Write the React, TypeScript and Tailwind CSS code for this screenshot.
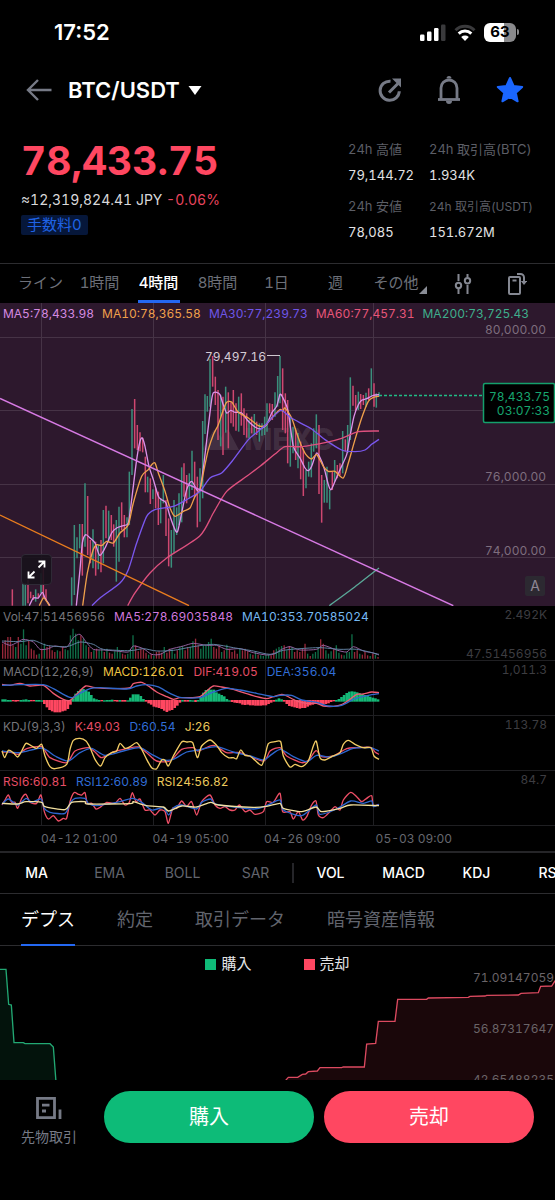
import type { ReactNode } from 'react';

type Point = [number, number];

// Series are plotted on a grid three times finer than the panel's own units
const PLOT_SCALE = 'scale(0.33333)';
const SLOT = 7.82;

const INTERVALS = ['ライン', '1時間', '4時間', '8時間', '1日', '週'];

const STATS = [
  { label: '24h 高値', value: '79,144.72', size: 'text-[13px]' },
  { label: '24h 取引高(BTC)', value: '1.934K', size: 'text-[13px]' },
  { label: '24h 安値', value: '78,085', size: 'text-[13px]' },
  { label: '24h 取引高(USDT)', value: '151.672M', size: 'text-xs' },
];

const MA_LEGEND = [
  { text: 'MA5:78,433.98', color: 'text-[#d58ae0]' },
  { text: 'MA10:78,365.58', color: 'text-[#f0a04b]' },
  { text: 'MA30:77,239.73', color: 'text-[#6f56e8]' },
  { text: 'MA60:77,457.31', color: 'text-[#e8567a]' },
  { text: 'MA200:73,725.43', color: 'text-[#3fae8c]' },
];

const MAIN_INDICATORS = ['MA', 'EMA', 'BOLL', 'SAR'];
const SUB_INDICATORS = ['VOL', 'MACD', 'KDJ', 'RSI'];
const DETAIL_TABS = ['デプス', '約定', '取引データ', '暗号資産情報'];
const DATES = ['04-12 01:00', '04-19 05:00', '04-26 09:00', '05-03 09:00'];
const GRID_X = [41, 153, 265, 373];

// x, high, low, 1 = up / 0 = down
const CANDLES: [number, number, number, number][] = [
  [37, 859, 908, 0], [69, 843, 908, 1], [76, 841, 908, 1], [84, 831, 901, 0], [92, 866, 886, 0],
  [100, 876, 891, 0], [107, 859, 896, 1], [115, 871, 886, 0], [123, 811, 871, 1], [130, 796, 886, 0],
  [138, 859, 891, 0], [215, 823, 908, 1], [223, 666, 876, 1], [231, 703, 766, 1], [239, 663, 736, 1],
  [247, 663, 818, 0], [255, 541, 731, 1], [263, 579, 756, 0], [271, 711, 781, 0], [279, 679, 796, 1],
  [287, 716, 818, 0], [295, 726, 799, 1], [303, 711, 808, 0], [310, 621, 781, 1], [318, 608, 706, 0],
  [326, 623, 716, 1], [334, 636, 711, 0], [341, 664, 731, 0], [349, 651, 836, 1], [357, 611, 776, 1],
  [365, 598, 681, 0], [373, 636, 703, 0], [381, 643, 703, 1], [388, 506, 666, 1], [396, 318, 516, 1],
  [404, 288, 436, 0], [412, 366, 441, 0], [420, 388, 445, 0], [428, 404, 448, 0], [436, 461, 568, 0],
  [443, 521, 568, 1], [451, 526, 603, 0], [459, 559, 588, 1], [467, 556, 616, 0], [475, 566, 666, 0],
  [482, 586, 661, 1], [490, 516, 601, 1], [498, 591, 699, 0], [506, 646, 790, 0], [514, 681, 794, 1],
  [522, 591, 751, 1], [530, 613, 696, 1], [537, 571, 666, 1], [545, 493, 658, 1], [552, 481, 581, 0],
  [560, 516, 601, 0], [568, 511, 586, 1], [576, 443, 561, 1], [584, 476, 581, 0], [592, 521, 673, 0],
  [600, 496, 656, 1], [608, 354, 586, 1], [615, 274, 393, 1], [622, 279, 326, 1], [630, 168, 311, 1],
  [638, 159, 251, 0], [646, 221, 306, 0], [654, 261, 411, 0], [662, 276, 430, 1], [669, 281, 456, 0],
  [677, 251, 389, 1], [685, 268, 436, 0], [693, 298, 361, 0], [700, 261, 371, 0], [708, 301, 383, 0],
  [716, 281, 386, 1], [724, 271, 368, 0], [732, 316, 396, 0], [740, 331, 404, 0], [747, 351, 406, 1],
  [755, 341, 391, 0], [763, 333, 396, 1], [770, 356, 396, 0], [778, 361, 416, 1], [786, 361, 398, 1],
  [794, 341, 396, 1], [801, 301, 386, 1], [809, 301, 331, 0], [817, 303, 351, 0], [825, 268, 341, 1],
  [833, 219, 311, 1], [840, 159, 301, 1], [848, 196, 381, 0], [856, 271, 391, 0], [863, 291, 481, 0],
  [871, 341, 491, 1], [879, 371, 451, 1], [887, 381, 471, 0], [894, 390, 496, 1], [902, 416, 529, 0],
  [910, 436, 579, 0], [918, 501, 556, 1], [926, 476, 521, 1], [934, 421, 523, 1], [941, 376, 446, 1],
  [949, 334, 436, 1], [957, 366, 573, 0], [965, 516, 659, 0], [973, 531, 599, 1], [981, 491, 599, 1],
  [989, 561, 619, 1], [997, 506, 561, 0], [1004, 471, 536, 1], [1012, 486, 526, 0], [1020, 481, 516, 0],
  [1028, 384, 511, 1], [1036, 409, 446, 0], [1043, 366, 450, 1], [1051, 223, 411, 1], [1059, 248, 308, 0],
  [1067, 276, 323, 0], [1075, 266, 321, 1], [1082, 273, 318, 0], [1090, 276, 306, 0], [1098, 269, 311, 1],
  [1106, 256, 291, 0], [1114, 196, 281, 1], [1122, 241, 311, 0], [1129, 271, 314, 1], [1137, 268, 281, 1],
];

const MA5: Point[] = [
  [229, 908], [240, 800], [247, 720], [257, 695], [270, 705], [285, 720], [299, 757], [315, 735], [335, 690],
  [350, 675], [370, 668], [385, 660], [395, 590], [410, 470], [420, 415], [427, 405], [435, 430], [447, 490],
  [460, 530], [475, 580], [485, 590], [498, 600], [510, 640], [525, 680], [533, 685], [545, 630], [560, 560],
  [575, 535], [590, 560], [600, 560], [612, 480], [625, 370], [635, 290], [640, 270], [650, 268], [660, 275],
  [668, 300], [680, 330], [692, 322], [705, 328], [725, 330], [745, 355], [765, 372], [780, 378], [800, 365],
  [815, 330], [830, 310], [840, 274], [848, 283], [860, 310], [867, 340], [880, 430], [900, 465], [915, 495],
  [925, 503], [935, 490], [950, 450], [965, 475], [975, 505], [985, 545], [993, 560], [1005, 535], [1020, 500],
  [1040, 455], [1050, 400], [1062, 340], [1075, 305], [1085, 292], [1100, 287], [1120, 277], [1137, 275],
];
const MA10: Point[] = [
  [248, 908], [262, 810], [278, 745], [290, 725], [305, 728], [320, 715], [340, 720], [360, 690], [385, 665],
  [400, 600], [425, 520], [445, 500], [455, 485], [465, 480], [475, 510], [495, 565], [510, 615], [525, 640],
  [550, 625], [570, 615], [585, 580], [600, 560], [612, 500], [625, 440], [640, 395], [655, 365], [670, 320],
  [680, 298], [695, 297], [715, 328], [745, 345], [775, 368], [795, 368], [815, 345], [840, 320], [848, 325],
  [855, 315], [875, 345], [890, 390], [905, 430], [918, 455], [935, 468], [950, 455], [970, 490], [985, 505],
  [1005, 505], [1030, 525], [1045, 480], [1065, 410], [1085, 345], [1105, 295], [1120, 283], [1137, 280],
];
const MA30: Point[] = [
  [276, 908], [300, 885], [360, 840], [385, 800], [410, 720], [440, 640], [465, 620], [520, 610], [560, 590],
  [600, 565], [630, 525], [665, 510], [700, 470], [745, 410], [775, 385], [800, 362], [825, 335], [845, 322],
  [870, 342], [905, 362], [935, 378], [975, 410], [1025, 441], [1065, 446], [1095, 441], [1115, 424], [1137, 409],
];
const MA60: Point[] = [
  [383, 908], [405, 870], [450, 810], [500, 765], [600, 698], [640, 630], [680, 565], [740, 520], [780, 490],
  [825, 453], [855, 431], [905, 431], [975, 419], [1025, 406], [1075, 386], [1137, 384],
];
const MA5_HEAD: Point[] = [[88, 908], [100, 885], [115, 885], [127, 868], [135, 885], [150, 908]];
const MA10_HEAD: Point[] = [[118, 908], [130, 885], [140, 895], [148, 908]];
const MA200: Point[] = [[988, 908], [1060, 855], [1137, 795]];

// Positive = up bar, negative = down bar
const VOLUME = [
  -45, -55, -65, -65, -40, 35, -65, 45, 88, 40, -55, -30, -25, -12, 15, -30, 45, -35, -38, -25, -20, 25, -22, -35, 28,
  25, 70, 90, 75, 55, -70, 60, 40, -35, -20, 25, -30, 25, 28, -20, 30, -18, -15, 22, 35, 25, -15, -12, 15, 28, 70,
  -40, -22, -30, -28, -18, 12, -15, 8, -20, -22, -18, 35, -18, -30, 28, 15, -25, 35, 38, -25, -35, 35, 52, -60, -40,
  30, 40, 40, 50, 60, -35, -30, -40, 20, -25, 42, -30, -20, -25, -15, 30, -25, -30, -22, 15, -12, 20, -12, 10, 8,
  12, 12, -10, -25, 30, 35, 38, -40, 25, -38, 35, -20, -25, -20, -30, -45, 15, -8, 15, 20, 35, -58, -45, 25, 15, 22,
  -28, 40, 18, -12, 10, 20, 20, 73, -20, -25, 15, -12, -20, -10, 8, -15, 12, -5,
];
const VOL_MA5: Point[] = [
  [6, 108], [30, 118], [50, 110], [70, 100], [100, 108], [120, 130], [145, 128], [165, 120], [200, 123], [220, 95],
  [240, 85], [260, 110], [280, 130], [310, 132], [350, 135], [385, 138], [400, 120], [430, 128], [455, 145],
  [480, 145], [510, 130], [550, 120], [580, 112], [620, 118], [650, 118], [680, 130], [720, 128], [760, 140],
  [800, 147], [825, 143], [845, 130], [870, 122], [900, 132], [950, 130], [970, 118], [1010, 132], [1040, 138],
  [1060, 122], [1090, 135], [1115, 140], [1137, 147],
];
const VOL_MA10: Point[] = [
  [6, 105], [60, 107], [100, 103], [140, 118], [200, 122], [240, 108], [280, 115], [310, 130], [390, 134],
  [430, 128], [470, 135], [520, 133], [580, 122], [640, 115], [700, 125], [760, 135], [810, 145], [850, 133],
  [900, 128], [960, 125], [1020, 130], [1070, 130], [1137, 145],
];

const MACD_BARS = [
  5, 5, 3, 3, -2, -3, -2, 3, 4, 5, 3, -2, -2, 3, 3, 2, -10, -20, -28, -32, -35, -35, -35, -32, -30, -25, -12, 8, 22,
  30, 35, 36, 32, 28, 18, 8, 5, 3, -2, 2, 3, 3, 4, -2, -3, 3, -3, -3, 2, 10, 20, 20, 20, 15, 6, -3, -8, -12, -18,
  -20, -22, -25, -30, -34, -30, -28, -22, -15, -6, 3, -3, -3, 3, 2, -4, 3, 12, 25, 33, 36, 34, 34, 26, 22, 18, 14, 6,
  2, -4, -6, -7, -8, -12, -13, -12, -14, -14, -15, -15, -15, -14, -14, -10, -6, -3, 4, 8, 5, -3, -10, -16, -18, -20,
  -22, -24, -22, -22, -18, -14, -12, -8, -10, -12, -12, -10, -8, -4, -2, 3, 6, 12, 18, 24, 28, 29, 28, 26, 23, 21,
  18, 16, 13, 10, 8, 5,
];
const DIF: Point[] = [
  [6, 70], [30, 73], [60, 67], [90, 75], [130, 73], [160, 97], [190, 115], [210, 118], [235, 95], [257, 75],
  [285, 80], [340, 83], [388, 81], [400, 68], [425, 64], [445, 75], [470, 93], [500, 107], [520, 115], [540, 110],
  [575, 110], [600, 107], [620, 90], [640, 75], [665, 78], [700, 85], [730, 95], [770, 107], [800, 113], [820, 107],
  [845, 100], [860, 105], [890, 120], [920, 127], [950, 127], [970, 135], [1000, 136], [1025, 131], [1050, 115],
  [1070, 100], [1090, 99], [1115, 93], [1137, 95],
];
const DEA: Point[] = [
  [6, 73], [60, 71], [130, 71], [160, 83], [190, 100], [215, 110], [240, 97], [270, 83], [300, 80], [380, 84],
  [410, 75], [440, 71], [475, 78], [510, 97], [545, 110], [600, 110], [640, 93], [680, 82], [720, 87], [770, 97],
  [820, 107], [840, 103], [875, 103], [905, 117], [950, 124], [985, 135], [1025, 133], [1065, 113], [1105, 103],
  [1137, 98],
];

const KDJ_J: Point[] = [
  [6, 105], [14, 125], [25, 103], [40, 110], [53, 123], [65, 105], [78, 82], [95, 90], [110, 97], [125, 85],
  [135, 120], [150, 152], [165, 158], [200, 145], [210, 100], [220, 73], [240, 67], [258, 75], [270, 95], [285, 130],
  [302, 150], [315, 125], [335, 110], [350, 105], [360, 82], [375, 97], [390, 92], [410, 80], [425, 100], [440, 130],
  [455, 155], [470, 158], [485, 132], [495, 133], [505, 150], [520, 120], [545, 78], [560, 78], [578, 80],
  [592, 125], [605, 90], [630, 72], [650, 88], [665, 110], [685, 125], [700, 125], [710, 128], [722, 102],
  [735, 118], [750, 120], [765, 133], [785, 148], [795, 120], [805, 83], [825, 77], [842, 77], [850, 120],
  [870, 153], [885, 145], [905, 152], [925, 135], [940, 90], [949, 76], [960, 125], [975, 132], [995, 122],
  [1020, 110], [1030, 85], [1045, 73], [1065, 85], [1090, 95], [1113, 95], [1122, 120], [1137, 130],
];
const KDJ_K: Point[] = [
  [6, 108], [30, 108], [55, 115], [80, 98], [125, 92], [150, 125], [200, 140], [225, 105], [265, 95], [285, 108],
  [305, 125], [340, 108], [380, 98], [415, 93], [440, 110], [470, 135], [510, 135], [545, 100], [580, 95],
  [595, 105], [640, 88], [680, 110], [720, 110], [790, 135], [810, 105], [840, 95], [860, 120], [905, 140],
  [925, 133], [948, 104], [965, 122], [1000, 120], [1040, 98], [1070, 95], [1112, 94], [1125, 108], [1137, 115],
];
const KDJ_D: Point[] = [
  [6, 105], [60, 110], [125, 96], [165, 120], [205, 135], [240, 110], [275, 97], [315, 118], [370, 105], [420, 95],
  [455, 115], [490, 132], [520, 130], [560, 108], [595, 102], [650, 92], [700, 108], [750, 120], [790, 132],
  [815, 115], [842, 100], [880, 122], [920, 137], [950, 118], [990, 123], [1030, 110], [1060, 97], [1110, 95],
  [1137, 105],
];

const RSI6: Point[] = [
  [6, 102], [15, 87], [25, 72], [35, 94], [45, 94], [53, 112], [65, 82], [78, 70], [90, 94], [110, 97], [123, 72],
  [133, 122], [145, 144], [160, 134], [175, 150], [190, 142], [200, 142], [210, 92], [222, 65], [235, 70], [245, 72],
  [255, 65], [262, 97], [275, 97], [288, 114], [303, 107], [320, 94], [345, 97], [360, 82], [375, 102], [388, 94],
  [397, 65], [408, 92], [420, 84], [435, 117], [450, 117], [465, 132], [480, 117], [495, 122], [505, 157],
  [518, 112], [530, 112], [545, 90], [560, 107], [575, 92], [590, 132], [605, 92], [630, 72], [645, 102], [660, 112],
  [675, 107], [690, 117], [705, 117], [718, 102], [735, 122], [750, 117], [765, 130], [790, 122], [800, 92],
  [820, 94], [840, 67], [848, 122], [870, 122], [880, 144], [895, 122], [908, 147], [920, 137], [935, 102],
  [948, 90], [955, 132], [970, 140], [990, 122], [1005, 107], [1020, 117], [1030, 87], [1052, 64], [1070, 77],
  [1085, 92], [1100, 82], [1115, 74], [1120, 104], [1137, 100],
];
const RSI12: Point[] = [
  [6, 100], [25, 84], [53, 102], [78, 82], [95, 94], [123, 84], [133, 112], [150, 124], [195, 127], [212, 94],
  [225, 82], [255, 82], [265, 97], [290, 104], [360, 92], [397, 82], [425, 94], [455, 117], [490, 110], [506, 132],
  [520, 110], [545, 102], [590, 114], [605, 94], [632, 84], [650, 100], [760, 114], [800, 104], [840, 87],
  [850, 117], [905, 134], [948, 102], [960, 130], [1010, 114], [1052, 90], [1090, 97], [1115, 90], [1120, 107],
  [1137, 100],
];
const RSI24: Point[] = [
  [6, 97], [53, 99], [78, 92], [125, 94], [135, 107], [195, 116], [215, 94], [255, 92], [265, 99], [390, 98],
  [400, 92], [440, 104], [490, 108], [506, 120], [545, 105], [590, 108], [632, 94], [655, 102], [760, 109],
  [800, 106], [840, 97], [850, 112], [905, 122], [948, 108], [965, 122], [1020, 112], [1052, 102], [1137, 104],
];

function smoothPath(points: Point[]) {
  let d = `M${points[0][0]} ${points[0][1]}`;
  for (let i = 0; i < points.length - 1; i++) {
    const p0 = points[Math.max(i - 1, 0)];
    const p1 = points[i];
    const p2 = points[i + 1];
    const p3 = points[Math.min(i + 2, points.length - 1)];
    const c1x = p1[0] + (p2[0] - p0[0]) / 8;
    const c1y = p1[1] + (p2[1] - p0[1]) / 8;
    const c2x = p2[0] - (p3[0] - p1[0]) / 8;
    const c2y = p2[1] - (p3[1] - p1[1]) / 8;
    d += `C${c1x} ${c1y} ${c2x} ${c2y} ${p2[0]} ${p2[1]}`;
  }
  return d;
}

function Series({ points, color, width = 4 }: { points: Point[]; color: string; width?: number }) {
  return <path d={smoothPath(points)} fill="none" stroke={color} strokeWidth={width} strokeLinejoin="round" />;
}

function StatusBar() {
  return (
    <div className="flex h-16 items-center justify-between pl-[54px] pr-9 text-white">
      <span className="text-[22px] font-semibold proportional-nums">17:52</span>
      <div className="flex items-center gap-2">
        <svg width="26" height="17" viewBox="0 0 26 17" fill="#fff">
          <rect x="0" y="10.5" width="4.5" height="6.5" rx="1.2" />
          <rect x="7" y="7.5" width="4.5" height="9.5" rx="1.2" />
          <rect x="14" y="4" width="4.5" height="13" rx="1.2" />
          <rect x="21" y="0.5" width="4.5" height="16.5" rx="1.2" fill="#3a3a3c" />
        </svg>
        <svg width="22" height="17" viewBox="0 0 22 17" fill="none">
          <path d="M1.5 6.2a13.6 13.6 0 0 1 19 0" stroke="#3a3a3c" strokeWidth="3" />
          <path d="M4.7 9.6a9 9 0 0 1 12.6 0" stroke="#fff" strokeWidth="3" />
          <path d="M11 17l-3.8-4a5.6 5.6 0 0 1 7.6 0z" fill="#fff" />
        </svg>
        <div className="flex items-center">
          <span className="flex h-[19px] w-8 items-center justify-center rounded-md bg-linear-to-r from-white from-63% to-[#8a8a8c] to-63% text-[15px] font-bold text-black">
            63
          </span>
          <span className="ml-px h-1.5 w-0.5 rounded-r bg-[#8a8a8c]" />
        </div>
      </div>
    </div>
  );
}

function Header() {
  return (
    <header className="flex h-[52px] items-center pl-[26px] pr-[31px]">
      <button aria-label="戻る">
        <svg width="26" height="22" viewBox="0 0 26 22" fill="none" stroke="#767a86" strokeWidth="2.4">
          <path d="M12 1L2 11l10 10M2 11h23.5" />
        </svg>
      </button>
      <button className="ml-4 flex items-center gap-2 text-[22px] font-semibold text-white">
        BTC/USDT
        <svg width="14" height="9" viewBox="0 0 14 9" fill="#fff">
          <path d="M0.5 0h13L7 9z" />
        </svg>
      </button>
      <div className="ml-auto flex items-center gap-[35px]">
        <button aria-label="共有">
          <svg width="24" height="26" viewBox="0 0 24 26" fill="none" stroke="#767a86" strokeWidth="3">
            <path d="M12.5 4.2a9.6 9.6 0 1 0 8.8 10" />
            <path d="M11 15.5L20 6.5" />
            <path d="M14 1.5h9v9z" fill="#767a86" stroke="none" />
          </svg>
        </button>
        <button aria-label="通知">
          <svg width="24" height="28" viewBox="0 0 24 28" fill="none" stroke="#767a86" strokeWidth="2.8">
            <path d="M4 23.5V12a8 8 0 0 1 16 0v11.5" />
            <path d="M1 23.5h22" />
            <path d="M9.5 2.6a2.5 2.5 0 0 1 5 0zM9 25h6a3 3 0 0 1-6 0z" fill="#767a86" stroke="none" />
          </svg>
        </button>
        <button aria-label="お気に入り">
          <svg width="28" height="28" viewBox="0 0 28 28" fill="#1a66ff" stroke="#1a66ff" strokeWidth="2" strokeLinejoin="round">
            <path d="M14 2l3.6 8 8.6.9-6.4 5.8 1.8 8.6L14 20.9l-7.6 4.4 1.8-8.6-6.4-5.8 8.6-.9z" />
          </svg>
        </button>
      </div>
    </header>
  );
}

function PriceSummary() {
  return (
    <section className="flex h-[147px] justify-between px-[21px] pt-[21px]">
      <div>
        <div className="text-[39px] font-bold leading-[48px] text-[#ff4761]">78,433.75</div>
        <div className="mt-[3px] text-sm leading-6 text-[#d8d8da]">
          ≈12,319,824.41 JPY <span className="text-[#e8455e]">-0.06%</span>
        </div>
        <span className="mt-0.5 inline-block rounded-xs bg-[#06173a] px-1.5 text-[15px] leading-5 text-[#1f63e6]">
          手数料0
        </span>
      </div>
      <dl className="grid grid-cols-[81px_105px] content-start gap-y-1.5">
        {STATS.map((stat) => (
          <div key={stat.label} className="whitespace-nowrap">
            <dt className={`${stat.size} leading-[25px] text-[#5c5e66]`}>{stat.label}</dt>
            <dd className="text-[13px] leading-[26px] text-[#e2e2e4]">{stat.value}</dd>
          </div>
        ))}
      </dl>
    </section>
  );
}

function IntervalTabs() {
  return (
    <nav className="grid h-10 grid-cols-[repeat(6,59fr)_70fr_55fr_53fr] border-t border-[#2c2c2f] pl-[11px] pr-3 text-[15px] text-[#6d7079]">
      {INTERVALS.map((label) => (
        <button
          key={label}
          className={
            label === '4時間'
              ? 'mx-auto w-[42px] whitespace-nowrap border-b-3 border-[#2468f2] pt-[3px] font-medium text-white'
              : 'whitespace-nowrap'
          }
        >
          {label}
        </button>
      ))}
      <button className="flex items-center justify-center whitespace-nowrap">
        その他
        <svg className="mt-3" width="8" height="8" viewBox="0 0 8 8" fill="#8a8d96">
          <path d="M8 0v8H0z" />
        </svg>
      </button>
      <button aria-label="設定" className="flex items-center justify-center">
        <svg width="18" height="22" viewBox="0 0 18 22" fill="none" stroke="#858892" strokeWidth="2">
          <path d="M4.5 1v7M4.5 16v5M13.5 1v3M13.5 12v9" />
          <circle cx="4.5" cy="12.5" r="2.7" />
          <circle cx="13.5" cy="7.8" r="2.7" />
        </svg>
      </button>
      <button aria-label="画面回転" className="flex items-center justify-center">
        <svg width="20" height="24" viewBox="0 0 20 24" fill="none" stroke="#858892" strokeWidth="2">
          <rect x="2" y="5" width="11" height="17" rx="1" />
          <path d="M5.5 8.5h4M10 2h3.5a3.5 3.5 0 0 1 3.5 3.5V10" />
          <path d="M13.8 9h6.4L17 13z" fill="#858892" stroke="none" />
        </svg>
      </button>
    </nav>
  );
}

function PriceChart() {
  return (
    <section className="relative bg-[#2d182d]">
      <svg viewBox="0 0 555 303" className="block h-auto w-full">
        <g stroke="#463346" strokeWidth="1">
          {[34, 107, 181, 254].map((y) => (
            <path key={y} d={`M0 ${y + 0.5}H555`} />
          ))}
          {GRID_X.map((x) => (
            <path key={x} d={`M${x + 0.5} 0V303`} />
          ))}
        </g>
        {/* watermark */}
        <g fill="#fff" fillOpacity="0.1">
          <path d="M202 147l11-19q2-3 4 0l4 7 4-7q2-3 4 0l10 19z" />
          <text x="244" y="147" fontSize="30" fontWeight="800">MEXC</text>
        </g>
        <g transform={PLOT_SCALE}>
          {CANDLES.map(([x, high, low, up]) => (
            <path key={x} d={`M${x} ${high}V${low}`} stroke={up ? '#3a8f7c' : '#cf4770'} strokeWidth="4.5" />
          ))}
          <Series points={MA5_HEAD} color="#dd92ea" />
          <Series points={MA10_HEAD} color="#f0a04b" />
          <Series points={MA5} color="#dd92ea" />
          <Series points={MA10} color="#f0a04b" />
          <Series points={MA30} color="#7a57ee" />
          <Series points={MA60} color="#de507e" />
          <Series points={MA200} color="#5aa898" />
          <path d="M0 286L1360 908" stroke="#d77ae4" strokeWidth="4.5" />
          <path d="M0 636L567 908" stroke="#ea7d1e" strokeWidth="4" />
        </g>
        <path d="M267 52.5h13" stroke="#cfc6cf" />
        <text x="266" y="58" textAnchor="end" fontSize="12" fill="#d5ccd5">79,497.16</text>
        <g fontSize="12" fill="#7e6e7e" textAnchor="end">
          <text x="546" y="31">80,000.00</text>
          <text x="546" y="178">76,000.00</text>
          <text x="546" y="252">74,000.00</text>
        </g>
        <path d="M379 92.5H483" stroke="#20bd86" strokeWidth="1.5" strokeDasharray="3 2" />
        <rect x="483.5" y="80.5" width="71" height="39" rx="1.5" fill="#000" stroke="#14a06c" strokeWidth="1.5" />
        <g fontSize="12" fill="#17a56f" textAnchor="end">
          <text x="550" y="98">78,433.75</text>
          <text x="550" y="112">03:07:33</text>
        </g>
      </svg>
      <div className="absolute inset-x-[3px] top-[3px] flex gap-2 whitespace-nowrap text-xs leading-4">
        {MA_LEGEND.map((item) => (
          <span key={item.text} className={item.color}>{item.text}</span>
        ))}
      </div>
      <button
        aria-label="全画面"
        className="absolute bottom-[21px] left-[21px] flex size-[31px] items-center justify-center rounded border border-[#2f2a36] bg-[#17121b]/90"
      >
        <svg width="19" height="19" viewBox="0 0 19 19" fill="none" stroke="#fff" strokeWidth="1.8">
          <path d="M11.5 1.5h6v6M17.5 1.5l-6 6M1.5 11.5v6h6M1.5 17.5l6-6" />
        </svg>
      </button>
      <button className="absolute bottom-2.5 right-2.5 size-5 rounded-xs bg-[#2c2931] text-sm leading-5 text-[#8f8794]">
        A
      </button>
    </section>
  );
}

interface PanelProps {
  legend: { text: string; color: string }[];
  max: string;
  min?: string;
  children: ReactNode;
}

function IndicatorPanel({ legend, max, min, children }: PanelProps) {
  return (
    <div className="relative">
      <svg viewBox="0 0 555 55" className="block h-auto w-full">
        <g stroke="#1f1f22" strokeWidth="1">
          <path d="M0 54.5H555" />
          {GRID_X.map((x) => (
            <path key={x} d={`M${x + 0.5} 0V55`} />
          ))}
        </g>
        <g transform={PLOT_SCALE}>{children}</g>
        <g fontSize="12" fill="#3d3d41" textAnchor="end">
          <text x="547" y="13">{max}</text>
          {min && <text x="547" y="52">{min}</text>}
        </g>
      </svg>
      <div className="absolute left-[3px] top-[3px] flex gap-[9px] whitespace-nowrap text-xs leading-4">
        {legend.map((item) => (
          <span key={item.text} className={item.color}>{item.text}</span>
        ))}
      </div>
    </div>
  );
}

function Indicators() {
  return (
    <section className="border-b-2 border-[#252528]">
      <IndicatorPanel
        legend={[
          { text: 'Vol:47.51456956', color: 'text-[#75757a]' },
          { text: 'MA5:278.69035848', color: 'text-[#cf78dd]' },
          { text: 'MA10:353.70585024', color: 'text-[#74b8f2]' },
        ]}
        max="2.492K"
        min="47.51456956"
      >
        {VOLUME.map((v, i) => (
          <path
            key={i}
            d={`M${8 + i * SLOT} 158v${-Math.abs(v)}`}
            stroke={v > 0 ? '#0f6e48' : '#96283a'}
            strokeWidth="4"
          />
        ))}
        <Series points={VOL_MA5} color="#94609f" width={3} />
        <Series points={VOL_MA10} color="#5f7fa0" width={3} />
      </IndicatorPanel>
      <IndicatorPanel
        legend={[
          { text: 'MACD(12,26,9)', color: 'text-[#75757a]' },
          { text: 'MACD:126.01', color: 'text-[#efc443]' },
          { text: 'DIF:419.05', color: 'text-[#e54d65]' },
          { text: 'DEA:356.04', color: 'text-[#316dd6]' },
        ]}
        max="1,011.3"
      >
        {MACD_BARS.map((v, i) => (
          <rect
            key={i}
            x={4 + i * SLOT}
            y={v > 0 ? 120 - v : 117}
            width="8"
            height={Math.abs(v) + 2}
            fill={v > 0 ? '#15b877' : '#ff4761'}
          />
        ))}
        <Series points={DIF} color="#f05a72" />
        <Series points={DEA} color="#3169cc" />
      </IndicatorPanel>
      <IndicatorPanel
        legend={[
          { text: 'KDJ(9,3,3)', color: 'text-[#75757a]' },
          { text: 'K:49.03', color: 'text-[#e54d65]' },
          { text: 'D:60.54', color: 'text-[#316dd6]' },
          { text: 'J:26', color: 'text-[#ecc95c]' },
        ]}
        max="113.78"
      >
        <Series points={KDJ_K} color="#ee4e66" />
        <Series points={KDJ_D} color="#2d66d0" />
        <Series points={KDJ_J} color="#f2cc64" />
      </IndicatorPanel>
      <IndicatorPanel
        legend={[
          { text: 'RSI6:60.81', color: 'text-[#e54d65]' },
          { text: 'RSI12:60.89', color: 'text-[#316dd6]' },
          { text: 'RSI24:56.82', color: 'text-[#ecc95c]' },
        ]}
        max="84.7"
      >
        <Series points={RSI6} color="#ee4e66" />
        <Series points={RSI12} color="#2d66d0" />
        <Series points={RSI24} color="#f2e0a0" />
      </IndicatorPanel>
      <div className="flex h-[25px] items-center pl-[7.4%] text-xs text-[#66686f]">
        {DATES.map((date) => (
          <time key={date} className="w-[21.7%] whitespace-nowrap">{date}</time>
        ))}
      </div>
    </section>
  );
}

function IndicatorTabs() {
  return (
    <nav className="flex h-[41px] items-center overflow-hidden border-b border-[#2c2c2f] text-sm">
      {MAIN_INDICATORS.map((name) => (
        <button
          key={name}
          className={name === 'MA' ? 'w-[73px] shrink-0 font-medium text-white' : 'w-[73px] shrink-0 text-[#62656e]'}
        >
          {name}
        </button>
      ))}
      <span className="h-5 w-0.5 shrink-0 bg-[#252529]" />
      {SUB_INDICATORS.map((name) => (
        <button key={name} className="w-[73px] shrink-0 font-medium text-white">
          {name}
        </button>
      ))}
    </nav>
  );
}

function DetailTabs() {
  return (
    <nav className="flex h-[52px] gap-[42px] border-b border-[#2c2c2f] pl-[21px] text-lg">
      {DETAIL_TABS.map((tab, i) => (
        <button
          key={tab}
          className={
            i === 0
              ? '-mb-px whitespace-nowrap border-b-2 border-[#2468f2] pt-0.5 text-white'
              : 'whitespace-nowrap text-[#62656e]'
          }
        >
          {tab}
        </button>
      ))}
    </nav>
  );
}

function DepthChart() {
  return (
    <section className="relative">
      <svg viewBox="0 0 555 134" className="block h-auto w-full">
        <g transform={PLOT_SCALE} strokeWidth="4">
          <path d="M-6 70H18L26 175L34 177L42 290L70 290L75 293H150L160 303L168 408H-6z" fill="#03130c" stroke="#22a873" />
          <path
            d="M857 403L865 394H893L907 385L917 384L925 377L952 375L960 365H1025L1030 363H1093L1100 294L1127 292L1135 226H1185L1193 160H1280L1285 156L1405 154L1410 151L1455 150L1460 148L1555 147L1563 142L1615 140L1622 121L1655 120L1665 105L1672 105V408H855z"
            fill="#1a070a"
            stroke="#dc4a60"
          />
        </g>
        <g fontSize="12" fill="#6a6468" textAnchor="end">
          <text x="554" y="36">71.09147059</text>
          <text x="554" y="87">56.87317647</text>
          <text x="554" y="138">42.65488235</text>
        </g>
      </svg>
      <div className="absolute inset-x-0 top-2 flex justify-center gap-[52px] text-[15px] leading-5 text-[#e4e4e6]">
        <span className="flex items-center gap-[5px]">
          <i className="size-[11px] bg-[#0fbb78]" />
          購入
        </span>
        <span className="flex items-center gap-[5px]">
          <i className="size-[11px] bg-[#ff4761]" />
          売却
        </span>
      </div>
    </section>
  );
}

function TradeBar() {
  return (
    <footer className="flex gap-2.5 px-[21px] pt-[11px] text-xl text-white">
      <button className="mr-[17px] flex flex-col items-center gap-2 pt-1.5 text-sm leading-5 text-[#767a86]">
        <svg width="26" height="22" viewBox="0 0 26 22" fill="none" stroke="#767a86" strokeWidth="2.8">
          <path d="M1.5 1.4h17v19.2h-17zM6 8.2h7.5M6 14h4M24 12.5V22" />
        </svg>
        先物取引
      </button>
      <button className="h-[52px] flex-1 rounded-full bg-[#0dbb78]">購入</button>
      <button className="h-[52px] flex-1 rounded-full bg-[#ff4761]">売却</button>
    </footer>
  );
}

export default function App() {
  return (
    <main className="min-h-screen overflow-hidden bg-black font-['Inter','Noto_Sans_CJK_JP',sans-serif] tabular-nums">
      <StatusBar />
      <Header />
      <PriceSummary />
      <IntervalTabs />
      <PriceChart />
      <Indicators />
      <IndicatorTabs />
      <DetailTabs />
      <DepthChart />
      <TradeBar />
    </main>
  );
}
